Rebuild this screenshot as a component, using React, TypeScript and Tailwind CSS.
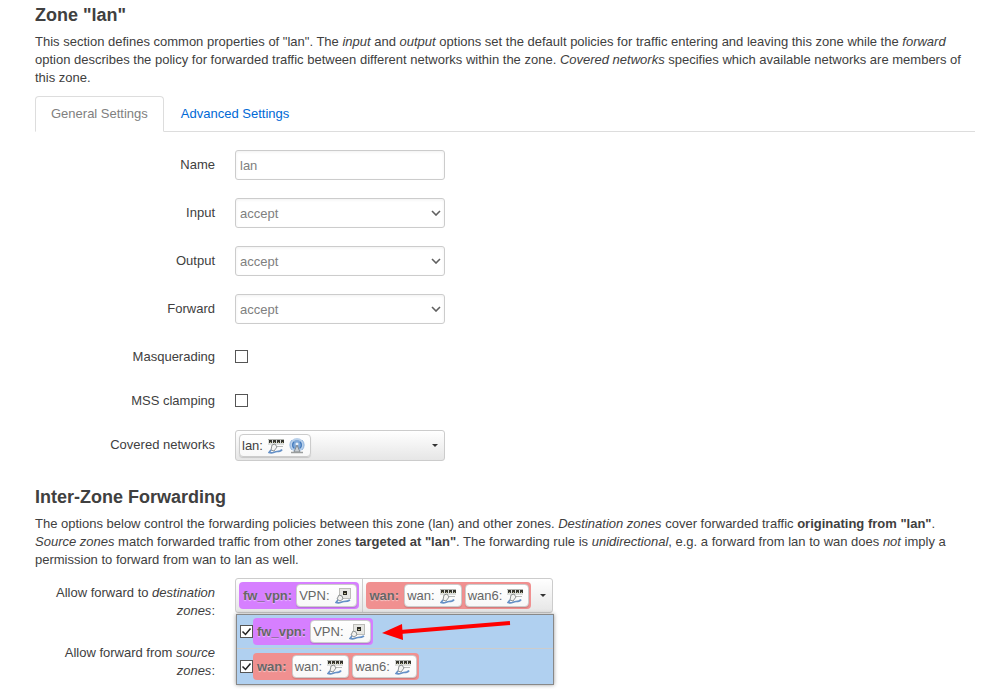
import { useState, type ReactNode } from "react";

type IconKind = "switch" | "port" | "wifi";

function SwitchIcon() {
  return (
    <svg width="16" height="16" viewBox="0 0 16 16" aria-hidden="true">
      <rect x="0" y="1" width="16" height="6" fill="#dcdedb" />
      <path d="M0 1.500h16" stroke="#b4b6b2" />
      <path d="M1 2h3v3H1zM5 2h3v3H5zM9 2h3v3H9zM13 2h3v3h-3z" fill="#35352e" />
      <path d="M2 4.500h1M6 4.500h1M10 4.500h1M14 4.500h1" stroke="#b9b68f" />
      <path d="M8 8.500h7" stroke="#b9bbb8" />
      <path d="M4 7l3-1 2 3-3 4-3-1z" fill="#f4f4f2" stroke="#85898a" strokeWidth=".9" />
      <path d="M3 12l-2 2.500c4 1.500 5-1 8-1 2 0 4 0 5-2" fill="none" stroke="#6590c6" strokeWidth="1.700" />
    </svg>
  );
}

function PortIcon() {
  return (
    <svg width="16" height="16" viewBox="0 0 16 16" aria-hidden="true">
      <rect x="4.500" y=".5" width="11" height="10" fill="#e6e6e2" stroke="#bcbcb8" />
      <path d="M8 3h4v4H8z" fill="#2b2b24" />
      <path d="M9 5.500h2" stroke="#b9b68f" />
      <path d="M4 7l3 1 1 3-3 2-3-2z" fill="#f0f0ee" stroke="#85898a" strokeWidth=".9" />
      <path d="M3 12l-2 2.500c4 1.500 5-1 8-1 2 0 4 0 6-1.500" fill="none" stroke="#6590c6" strokeWidth="1.700" />
    </svg>
  );
}

function WifiIcon() {
  return (
    <svg width="16" height="16" viewBox="0 0 16 16" aria-hidden="true">
      <circle cx="8" cy="7" r="7" fill="#b9d0ea" />
      <circle cx="8" cy="7" r="5" fill="#7ea8d8" />
      <path d="M3 12a7 7 0 010-10M13 12a7 7 0 000-10" fill="none" stroke="#8db2dd" />
      <path d="M5 10a4 4 0 010-6M11 10a4 4 0 000-6" fill="none" stroke="#4479bb" strokeWidth="1.200" />
      <circle cx="8" cy="6" r="1.500" fill="#eaf1f9" />
      <path d="M8 7l-3 7h6z" fill="#c9cfd4" stroke="#7f868c" strokeWidth=".9" />
      <path d="M2 14.500h12" stroke="#9a9d9d" strokeWidth="1.500" />
    </svg>
  );
}

function NetIcon({ kind }: { kind: IconKind }) {
  if (kind === "switch") return <SwitchIcon />;
  if (kind === "port") return <PortIcon />;
  return <WifiIcon />;
}

function NetworkBadge({ name, icons }: { name: string; icons: IconKind[] }) {
  return (
    <span className="inline-flex h-[23px] items-center gap-[5px] rounded border border-[#cccccc] bg-gradient-to-b from-white to-[#f8f8f8] pr-[5px] pl-[2px] shadow-[0_1px_1px_rgba(0,0,0,0.15)]">
      <span>{name}:</span>
      {icons.map((kind) => (
        <NetIcon key={kind} kind={kind} />
      ))}
    </span>
  );
}

function ZoneBadge({ zone }: { zone: "fw_vpn" | "wan" }) {
  const vpn = zone === "fw_vpn";
  return (
    <span
      className={`inline-flex h-[27px] items-center rounded pl-[2px] text-[#666666] ${vpn ? "gap-[2px] bg-[#d67fff] pr-[2px]" : "gap-[3px] bg-[#f09090] pr-[2px]"}`}
    >
      <strong className="px-[2px] [text-shadow:0_1px_1px_rgba(255,255,255,0.5)]">{zone}:</strong>
      {vpn ? (
        <NetworkBadge name="VPN" icons={["port"]} />
      ) : (
        <>
          <NetworkBadge name="wan" icons={["switch"]} />
          <NetworkBadge name="wan6" icons={["switch"]} />
        </>
      )}
    </span>
  );
}

function Caret() {
  return <span className="border-x-[3px] border-t-[3px] border-x-transparent border-t-[#333333]" />;
}

function Row({ id, label, children, className = "" }: { id: string; label: ReactNode; children?: ReactNode; className?: string }) {
  return (
    <div className={`flex items-start gap-5 ${className}`}>
      <label htmlFor={id} className="w-[180px] shrink-0 pt-[6px] text-right">
        {label}
      </label>
      {children}
    </div>
  );
}

const fieldStyle =
  "block h-[30px] w-[210px] rounded-[3px] border border-[#cccccc] bg-white px-1 text-[13px] text-[#808080] shadow-[inset_0_1px_3px_rgba(0,0,0,0.06)] outline-none";

function PolicySelect({ id }: { id: string }) {
  return (
    <div className="relative">
      <select id={id} defaultValue="accept" className={`${fieldStyle} appearance-none pt-[2px]`}>
        <option>accept</option>
        <option>reject</option>
        <option>drop</option>
      </select>
      <svg width="10" height="6" viewBox="0 0 10 6" className="pointer-events-none absolute top-3 right-1" aria-hidden="true">
        <path d="M1 1l4 4 4-4" fill="none" stroke="#606060" strokeWidth="1.600" />
      </svg>
    </div>
  );
}

function Tick({ id, label, checked = false }: { id: string; label?: string; checked?: boolean }) {
  return (
    <span className="relative inline-flex">
      <input
        id={id}
        type="checkbox"
        aria-label={label}
        defaultChecked={checked}
        className="peer size-[13px] appearance-none border border-[#555555] bg-white"
      />
      <svg
        width="13"
        height="13"
        viewBox="0 0 13 13"
        className="pointer-events-none absolute inset-0 hidden peer-checked:block"
        aria-hidden="true"
      >
        <path d="M2.500 6.500l3 3L10.500 3.500" fill="none" stroke="#222222" strokeWidth="1.500" />
      </svg>
    </span>
  );
}

export default function App() {
  const [open, setOpen] = useState(true);
  return (
    <main className="bg-white pr-4 pb-[10px] pl-[35px] font-['Liberation_Sans',Arial,sans-serif] text-[13px] leading-[18px] text-[#404040]">
      <section>
        <h3 className="pb-[3px] text-lg leading-[30px] font-bold">Zone "lan"</h3>
        <p>
          This section defines common properties of "lan". The <em>input</em> and <em>output</em> options set the default
          policies for traffic entering and leaving this zone while the <em>forward</em> option describes the policy for
          forwarded traffic between different networks within the zone. <em>Covered networks</em> specifies which available
          networks are members of this zone.
        </p>
        <nav className="mt-[9px] flex border-b border-[#dddddd]">
          <a
            href="#general"
            className="-mb-px mr-px rounded-t border border-[#dddddd] border-b-white bg-white px-[15px] pt-2 pb-[7px] text-[#808080]"
          >
            General Settings
          </a>
          <a href="#advanced" className="px-4 pt-[9px] pb-2 text-[#0069d6]">
            Advanced Settings
          </a>
        </nav>

        <div className="flex flex-col gap-[18px] pt-[18px]">
          <Row id="name" label="Name">
            <input id="name" type="text" defaultValue="lan" className={fieldStyle} />
          </Row>
          <Row id="input" label="Input">
            <PolicySelect id="input" />
          </Row>
          <Row id="output" label="Output">
            <PolicySelect id="output" />
          </Row>
          <Row id="forward" label="Forward">
            <PolicySelect id="forward" />
          </Row>
          <Row id="masq" label="Masquerading" className="h-[26px]">
            <span className="pt-2 leading-none">
              <Tick id="masq" />
            </span>
          </Row>
          <Row id="mss" label="MSS clamping" className="h-[26px]">
            <span className="pt-2 leading-none">
              <Tick id="mss" />
            </span>
          </Row>
          <Row id="networks" label="Covered networks">
            <button
              id="networks"
              type="button"
              className="flex h-[31px] w-[210px] items-center justify-between rounded-[3px] border border-[#cccccc] bg-gradient-to-b from-white to-[#e6e6e6] pr-[6px] pl-[3px]"
            >
              <NetworkBadge name="lan" icons={["switch", "wifi"]} />
              <Caret />
            </button>
          </Row>
        </div>
      </section>

      <section className="pt-[21px]">
        <h3 className="pb-[3px] text-lg leading-[30px] font-bold">Inter-Zone Forwarding</h3>
        <p>
          The options below control the forwarding policies between this zone (lan) and other zones.{" "}
          <em>Destination zones</em> cover forwarded traffic <strong>originating from "lan"</strong>.{" "}
          <em>Source zones</em> match forwarded traffic from other zones <strong>targeted at "lan"</strong>. The forwarding
          rule is <em>unidirectional</em>, e.g. a forward from lan to wan does <em>not</em> imply a permission to forward from
          wan to lan as well.
        </p>
        <div className="flex flex-col gap-[18px] pt-[9px]">
          <Row
            id="destination"
            label={
              <>
                Allow forward to <em>destination zones</em>:
              </>
            }
          >
            <div className="relative">
              <button
                id="destination"
                type="button"
                aria-expanded={open}
                onClick={() => setOpen(!open)}
                className="flex h-[35px] items-center rounded-[3px] border border-[#cccccc] bg-gradient-to-b from-white to-[#e6e6e6] pr-[6px] pl-[3px]"
              >
                <span className="flex h-full items-center border-r border-[#cccccc] pr-[3px]">
                  <ZoneBadge zone="fw_vpn" />
                </span>
                <span className="mr-[9px] ml-[3px] flex">
                  <ZoneBadge zone="wan" />
                </span>
                <Caret />
              </button>
              {open && (
                <ul className="absolute top-9 left-px w-full border border-[#888888] bg-[#b0d0f0] shadow-[0_0_4px_rgba(0,0,0,0.4)]">
                  <li className="flex h-[34px] items-center border-b border-[#cccccc] pl-[3px]">
                    <Tick id="opt-vpn" label="fw_vpn" checked />
                    <ZoneBadge zone="fw_vpn" />
                    <svg width="129" height="20" viewBox="0 0 129 20" className="mb-1 ml-[9px]" aria-hidden="true">
                      <path d="M18 12L128 3" stroke="#ff0000" strokeWidth="4" />
                      <path d="M0 13L20 4l1 16z" fill="#ff0000" />
                    </svg>
                  </li>
                  <li className="flex h-[35px] items-center pl-[3px]">
                    <Tick id="opt-wan" label="wan" checked />
                    <ZoneBadge zone="wan" />
                  </li>
                </ul>
              )}
            </div>
          </Row>
          <Row
            id="source"
            label={
              <>
                Allow forward from <em>source zones</em>:
              </>
            }
          >
            <button id="source" type="button" aria-label="Source zones" className="w-[210px]" />
          </Row>
        </div>
      </section>
    </main>
  );
}
